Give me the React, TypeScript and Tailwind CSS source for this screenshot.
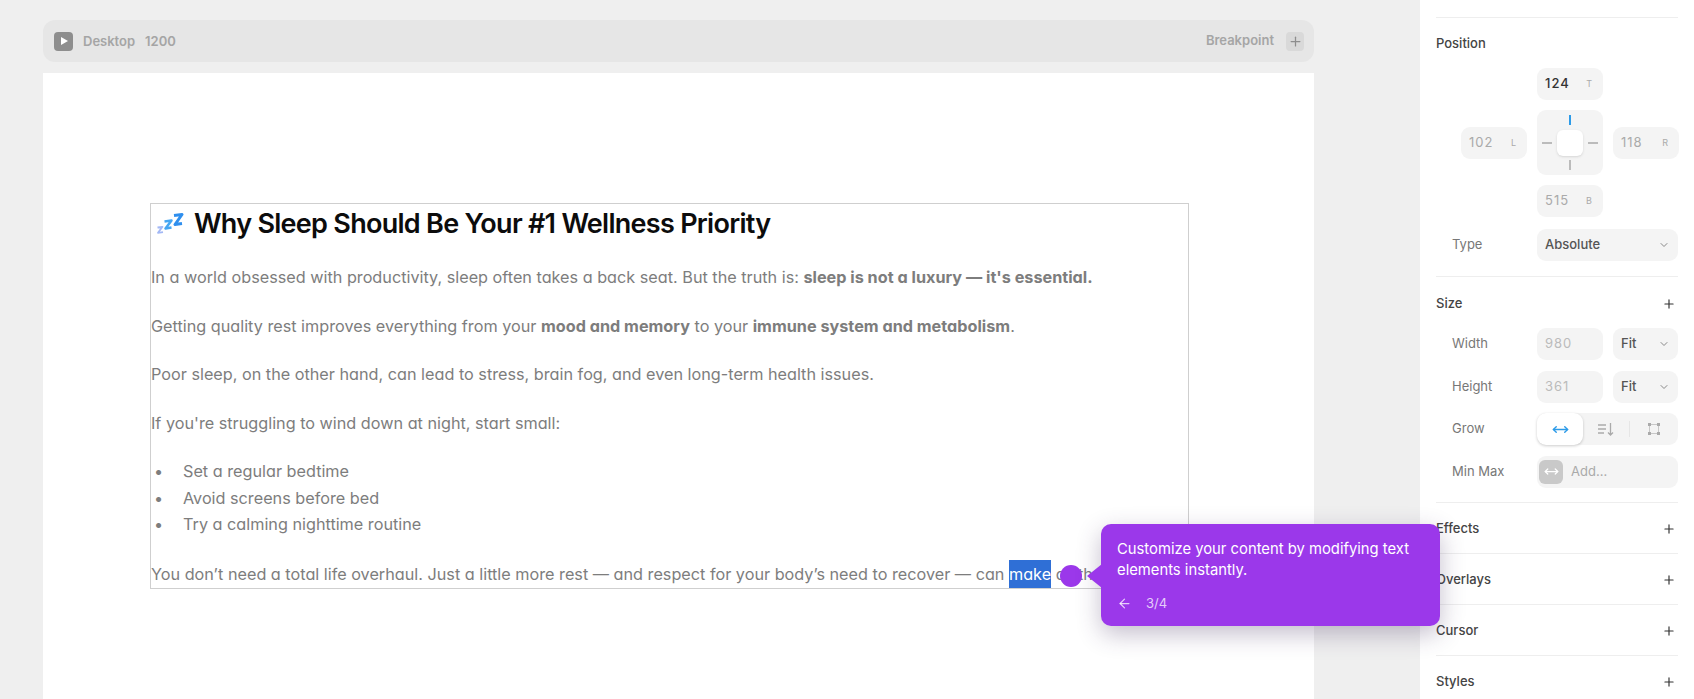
import { ArrowLeft, ChevronDown, MoveHorizontal, Plus } from 'lucide-react'

function NudgeInput({ value, side, active }: { value: string; side: string; active?: boolean }) {
  return (
    <div className="h-8 bg-[#f4f4f4] rounded-[9px] flex items-center justify-between pl-2 pr-2.5 text-[13px] tracking-[1px]">
      <span className={active ? 'text-[#333] font-medium' : 'text-[#aaa]'}>{value}</span>
      <span className="text-[9px] text-[#aaa]">{side}</span>
    </div>
  )
}

function Select({ label, className }: { label: string; className?: string }) {
  return (
    <div className={`h-8 bg-[#f4f4f4] rounded-[9px] flex items-center justify-between pl-2 pr-2 text-[13px] font-medium text-[#555] ${className ?? ''}`}>
      <span>{label}</span>
      <ChevronDown size={12} className="text-[#888]" />
    </div>
  )
}

function Row({ label, children }: { label: string; children: React.ReactNode }) {
  return (
    <div className="flex items-center pl-4">
      <span className="w-[85px] text-[13px] text-[#777]">{label}</span>
      <div className="flex-1 flex gap-2.5">{children}</div>
    </div>
  )
}

function CollapsedSection({ title }: { title: string }) {
  return (
    <div className="h-[51px] shrink-0 flex items-center justify-between border-b border-[#eeeeee] pr-0.5 pt-[2px]">
      <span className="text-[13px] font-medium text-[#444]">{title}</span>
      <Plus size={14} className="text-[#333]" />
    </div>
  )
}

function PositionPad() {
  return (
    <div className="h-[65px] bg-[#f4f4f4] rounded-[9px] grid grid-cols-[1fr_26px_1fr] grid-rows-[1fr_26px_1fr] place-items-center">
      <span />
      <span className="w-0.5 h-2.5 bg-[#2d9be8]" />
      <span />
      <span className="w-2.5 h-0.5 bg-[#bbb]" />
      <span className="w-[26px] h-[26px] bg-white rounded-md shadow-sm" />
      <span className="w-2.5 h-0.5 bg-[#bbb]" />
      <span />
      <span className="w-0.5 h-2.5 bg-[#bbb]" />
      <span />
    </div>
  )
}

function Sidebar() {
  return (
    <aside className="w-[274px] shrink-0 bg-white px-4 flex flex-col h-[699px] overflow-hidden">
      <div className="h-[18px] shrink-0 border-b border-[#eeeeee]" />

      {/* Position */}
      <div className="h-[259px] shrink-0 border-b border-[#eeeeee] pt-[17px]">
        <div className="text-[13px] font-medium text-[#444] leading-[17px]">Position</div>
        <div className="grid grid-cols-[66px_66px_66px] gap-x-2.5 gap-y-[10px] pl-[25px] mt-[16px] items-center">
          <span />
          <NudgeInput value="124" side="T" active />
          <span />
          <NudgeInput value="102" side="L" />
          <PositionPad />
          <NudgeInput value="118" side="R" />
          <span />
          <NudgeInput value="515" side="B" />
          <span />
        </div>
        <div className="mt-[12px]">
          <Row label="Type">
            <Select label="Absolute" className="flex-1" />
          </Row>
        </div>
      </div>

      {/* Size */}
      <div className="h-[226px] shrink-0 border-b border-[#eeeeee] pt-[18px]">
        <div className="flex items-center justify-between pr-0.5 leading-[17px]">
          <span className="text-[13px] font-medium text-[#444]">Size</span>
          <Plus size={14} className="text-[#333]" />
        </div>
        <div className="flex flex-col gap-[10.5px] mt-[16px]">
          <Row label="Width">
            <div className="w-[66px] h-8 bg-[#f4f4f4] rounded-[9px] flex items-center pl-2 text-[13px] tracking-[1px] text-[#bbb]">980</div>
            <Select label="Fit" className="flex-1" />
          </Row>
          <Row label="Height">
            <div className="w-[66px] h-8 bg-[#f4f4f4] rounded-[9px] flex items-center pl-2 text-[13px] tracking-[1px] text-[#bbb]">361</div>
            <Select label="Fit" className="flex-1" />
          </Row>
          <Row label="Grow">
            <div className="flex-1 h-8 bg-[#f4f4f4] rounded-[9px] flex items-center">
              <div className="w-[46px] h-8 bg-white rounded-[9px] shadow-[0_1px_3px_rgba(0,0,0,0.2)] flex items-center justify-center">
                <MoveHorizontal size={17} className="text-[#2d9be8]" />
              </div>
              <div className="w-[46px] flex items-center justify-center text-[#aaa]">
                <svg width="16" height="14" viewBox="0 0 16 14" fill="none" stroke="currentColor" strokeWidth="1.3">
                  <path d="M0 3h8M0 7h8M0 11h6M12.5 1v12M10 10.5l2.5 2.5 2.5-2.5" />
                </svg>
              </div>
              <span className="w-px h-4 bg-[#e6e6e6]" />
              <div className="flex-1 flex items-center justify-center text-[#aaa]">
                <svg width="14" height="14" viewBox="0 0 14 14" fill="none">
                  <path d="M2.5 2.5h9v9h-9z" stroke="#c8c8c8" strokeWidth="1" />
                  <path d="M1 1h3v3H1zM10 1h3v3h-3zM1 10h3v3H1zM10 10h3v3h-3z" fill="currentColor" />
                </svg>
              </div>
            </div>
          </Row>
          <Row label="Min Max">
            <div className="flex-1 h-8 bg-[#f4f4f4] rounded-[9px] flex items-center gap-2 pl-0.5">
              <div className="w-6 h-6 bg-[#c9c9c9] rounded-md flex items-center justify-center">
                <MoveHorizontal size={15} className="text-white" />
              </div>
              <span className="text-[13px] text-[#aaa]">Add...</span>
            </div>
          </Row>
        </div>
      </div>

      <CollapsedSection title="Effects" />
      <CollapsedSection title="Overlays" />
      <CollapsedSection title="Cursor" />
      <CollapsedSection title="Styles" />
    </aside>
  )
}

function SleepIcon() {
  return (
    <svg width="28" height="22" viewBox="0 0 28 22" fill="none" strokeLinejoin="round" className="shrink-0">
      <path d="M18 2.5l8-1-7 10 7-1" stroke="#2f8fee" strokeWidth="3" />
      <path d="M8.5 8.5l7-1-6 8 6-1" stroke="#45a6f2" strokeWidth="2.5" />
      <path d="M1.5 14.5l5-.7-4.5 6 5-.7" stroke="#a3b8f5" strokeWidth="1.8" />
    </svg>
  )
}

function Bullet({ children }: { children: React.ReactNode }) {
  return (
    <li className="flex">
      <span className="w-[32px] pl-[3px]">•</span>
      <span>{children}</span>
    </li>
  )
}

function Article() {
  return (
    <div className="w-[1039px] h-[386px] border border-[#cfcfcf] font-['Inter',sans-serif] text-[16.23px] leading-[26.5px] text-[#7d7d7d] [font-feature-settings:'cv11'] whitespace-nowrap">
      <div className="flex items-center gap-[10px] pl-[5px] pt-[2px] h-[38px]">
        <SleepIcon />
        <h1 className="text-[27px] leading-[36px] font-semibold text-[#0c0c0c] tracking-[-0.72px]">Why Sleep Should Be Your #1 Wellness Priority</h1>
      </div>
      <p className="mt-[22px]">In a world obsessed with productivity, sleep often takes a back seat. But the truth is: <strong className="font-bold">sleep is not a luxury — it's essential.</strong></p>
      <p className="mt-[22px]">Getting quality rest improves everything from your <strong className="font-bold">mood and memory</strong> to your <strong className="font-bold">immune system and metabolism</strong>.</p>
      <p className="mt-[22px]">Poor sleep, on the other hand, can lead to stress, brain fog, and even long-term health issues.</p>
      <p className="mt-[22px]">If you're struggling to wind down at night, start small:</p>
      <ul className="mt-[22px]">
        <Bullet>Set a regular bedtime</Bullet>
        <Bullet>Avoid screens before bed</Bullet>
        <Bullet>Try a calming nighttime routine</Bullet>
      </ul>
      <p className="mt-[22px]">You don’t need a total life overhaul. Just a little more rest — and respect for your body’s need to recover — can <span className="bg-[#2f6fd6] text-white inline-block leading-[28px]">make</span> all the difference.</p>
    </div>
  )
}

function Tour() {
  return (
    <>
      <span className="absolute left-[1060px] top-[565px] w-[22px] h-[22px] rounded-full bg-[#9b38ea]" />
      <div className="absolute left-[1101px] top-[524px] w-[339px] h-[102px] rounded-[10px] bg-[#9b38ea] shadow-[0_8px_24px_rgba(60,40,90,0.3)] px-4 pt-[15px] text-white font-['Inter',sans-serif]">
        <span className="absolute -left-[14px] top-[40px] w-0 h-0 border-y-[12px] border-y-transparent border-r-[15px] border-r-[#9b38ea]" />
        <p className="text-[14.8px] leading-[21px]">Customize your content by modifying text elements instantly.</p>
        <div className="flex items-center gap-[14px] mt-[13px] text-[13px] text-white/75">
          <ArrowLeft size={15} />
          <span>3/4</span>
        </div>
      </div>
    </>
  )
}

export default function App() {
  return (
    <div className="relative flex w-[1694px] h-[699px] overflow-hidden bg-[#efefef] font-['Inter',sans-serif]">
      <main className="flex-1 pl-[43px] pr-[106px] pt-5 flex flex-col">
        <div className="h-[42px] shrink-0 rounded-xl bg-[#e6e6e6] flex items-center justify-between pl-[11px] pr-[10px] text-[13px] font-semibold text-[#a5a5a5]">
          <div className="flex items-center">
            <span className="w-[19px] h-[19px] rounded bg-[#8e8e8e] flex items-center justify-center">
              <svg width="10" height="10" viewBox="0 0 10 10"><path d="M2 1v8l7-4z" fill="#fff" /></svg>
            </span>
            <span className="ml-[10px] pt-px">Desktop</span>
            <span className="ml-[10px] pt-px">1200</span>
          </div>
          <div className="flex items-center gap-[12px]">
            <span>Breakpoint</span>
            <span className="w-[18px] h-[19px] rounded bg-[#d9d9d9] flex items-center justify-center">
              <Plus size={15} className="text-[#8e8e8e]" />
            </span>
          </div>
        </div>
        <div className="mt-[11px] flex-1 bg-white pl-[107px] pt-[130px]">
          <Article />
        </div>
      </main>
      <Sidebar />
      <Tour />
    </div>
  )
}
